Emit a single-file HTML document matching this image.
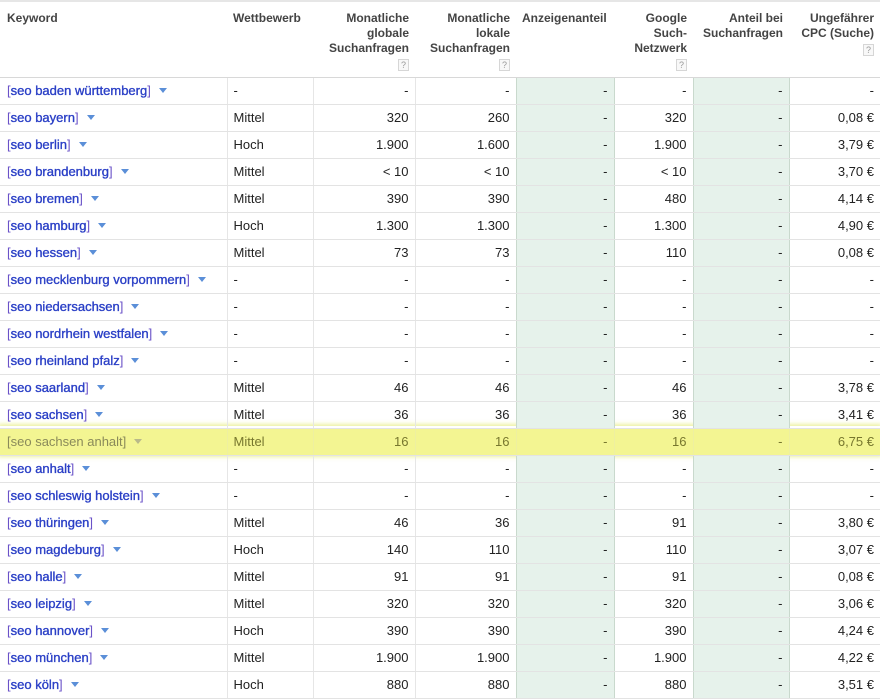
<!DOCTYPE html>
<html><head><meta charset="utf-8"><style>
*{margin:0;padding:0;box-sizing:border-box}
body{width:880px;height:693px;overflow:hidden;background:#fff;font-family:"Liberation Sans",Arial,sans-serif;position:relative}
table{border-collapse:collapse;table-layout:fixed;position:absolute;left:0;top:0;width:880px}
td,th{font-size:13px;border-bottom:1px solid #e3e3e3;border-left:1px solid #e6e6e6;height:27px;padding:0 6px;white-space:nowrap;color:#222}
th{font-size:12px;font-weight:bold;color:#444;vertical-align:top;text-align:right;height:76px;padding-top:9px;line-height:15px;border-top:2px solid #e6e6e6;border-left:none;border-bottom:1px solid #d8d8d8}
th.l{text-align:left}
td.r{text-align:right}
td:first-child{border-left:none;padding-left:7px}
td.g{background:#e6f2eb;border-left:1px solid #c9d9cd}
td.ga{border-left:1px solid #c9d9cd}
.q{display:inline-block;width:11px;height:12px;border:1px solid #d6d6d6;background:#f8f8f8;color:#999;font-size:9px;font-weight:normal;line-height:10px;text-align:center;margin-top:3px}
.k{color:#2a3fc6;-webkit-text-stroke:0.35px #2a3fc6}
.b{color:#6a52c8;-webkit-text-stroke:0}
.a{display:inline-block;width:0;height:0;border-left:4px solid transparent;border-right:4px solid transparent;border-top:5px solid #5b8fd8;margin-left:8px;vertical-align:2px}
tr.h td{background:#f3f592;color:#77772e;border-left-color:#eef0a0}
tr.h .k,tr.h .b{color:#8a8a5a;-webkit-text-stroke:0}
tr.h .a{border-top-color:#b9b98a}
.glow{position:absolute;left:0;top:426px;width:880px;height:29px;box-shadow:0 0 4px 2px rgba(230,235,120,.7);pointer-events:none}
</style></head><body>
<div class="glow"></div>
<table>
<colgroup><col style="width:227px"><col style="width:86px"><col style="width:102px"><col style="width:101px"><col style="width:98px"><col style="width:79px"><col style="width:96px"><col style="width:91px"></colgroup>
<tr><th class="l" style="padding-left:7px">Keyword</th><th class="l">Wettbewerb</th><th>Monatliche<br>globale<br>Suchanfragen<br><span class="q">?</span></th><th>Monatliche<br>lokale<br>Suchanfragen<br><span class="q">?</span></th><th class="l">Anzeigenanteil</th><th>Google<br>Such-<br>Netzwerk<br><span class="q">?</span></th><th>Anteil bei<br>Suchanfragen</th><th>Ungefährer<br>CPC (Suche)<br><span class="q">?</span></th></tr>
<tr><td><span class="b">[</span><span class="k">seo baden württemberg</span><span class="b">]</span><span class="a"></span></td><td>-</td><td class="r">-</td><td class="r">-</td><td class="r g">-</td><td class="r ga">-</td><td class="r g">-</td><td class="r ga">-</td></tr>
<tr><td><span class="b">[</span><span class="k">seo bayern</span><span class="b">]</span><span class="a"></span></td><td>Mittel</td><td class="r">320</td><td class="r">260</td><td class="r g">-</td><td class="r ga">320</td><td class="r g">-</td><td class="r ga">0,08 €</td></tr>
<tr><td><span class="b">[</span><span class="k">seo berlin</span><span class="b">]</span><span class="a"></span></td><td>Hoch</td><td class="r">1.900</td><td class="r">1.600</td><td class="r g">-</td><td class="r ga">1.900</td><td class="r g">-</td><td class="r ga">3,79 €</td></tr>
<tr><td><span class="b">[</span><span class="k">seo brandenburg</span><span class="b">]</span><span class="a"></span></td><td>Mittel</td><td class="r">&lt; 10</td><td class="r">&lt; 10</td><td class="r g">-</td><td class="r ga">&lt; 10</td><td class="r g">-</td><td class="r ga">3,70 €</td></tr>
<tr><td><span class="b">[</span><span class="k">seo bremen</span><span class="b">]</span><span class="a"></span></td><td>Mittel</td><td class="r">390</td><td class="r">390</td><td class="r g">-</td><td class="r ga">480</td><td class="r g">-</td><td class="r ga">4,14 €</td></tr>
<tr><td><span class="b">[</span><span class="k">seo hamburg</span><span class="b">]</span><span class="a"></span></td><td>Hoch</td><td class="r">1.300</td><td class="r">1.300</td><td class="r g">-</td><td class="r ga">1.300</td><td class="r g">-</td><td class="r ga">4,90 €</td></tr>
<tr><td><span class="b">[</span><span class="k">seo hessen</span><span class="b">]</span><span class="a"></span></td><td>Mittel</td><td class="r">73</td><td class="r">73</td><td class="r g">-</td><td class="r ga">110</td><td class="r g">-</td><td class="r ga">0,08 €</td></tr>
<tr><td><span class="b">[</span><span class="k">seo mecklenburg vorpommern</span><span class="b">]</span><span class="a"></span></td><td>-</td><td class="r">-</td><td class="r">-</td><td class="r g">-</td><td class="r ga">-</td><td class="r g">-</td><td class="r ga">-</td></tr>
<tr><td><span class="b">[</span><span class="k">seo niedersachsen</span><span class="b">]</span><span class="a"></span></td><td>-</td><td class="r">-</td><td class="r">-</td><td class="r g">-</td><td class="r ga">-</td><td class="r g">-</td><td class="r ga">-</td></tr>
<tr><td><span class="b">[</span><span class="k">seo nordrhein westfalen</span><span class="b">]</span><span class="a"></span></td><td>-</td><td class="r">-</td><td class="r">-</td><td class="r g">-</td><td class="r ga">-</td><td class="r g">-</td><td class="r ga">-</td></tr>
<tr><td><span class="b">[</span><span class="k">seo rheinland pfalz</span><span class="b">]</span><span class="a"></span></td><td>-</td><td class="r">-</td><td class="r">-</td><td class="r g">-</td><td class="r ga">-</td><td class="r g">-</td><td class="r ga">-</td></tr>
<tr><td><span class="b">[</span><span class="k">seo saarland</span><span class="b">]</span><span class="a"></span></td><td>Mittel</td><td class="r">46</td><td class="r">46</td><td class="r g">-</td><td class="r ga">46</td><td class="r g">-</td><td class="r ga">3,78 €</td></tr>
<tr><td><span class="b">[</span><span class="k">seo sachsen</span><span class="b">]</span><span class="a"></span></td><td>Mittel</td><td class="r">36</td><td class="r">36</td><td class="r g">-</td><td class="r ga">36</td><td class="r g">-</td><td class="r ga">3,41 €</td></tr>
<tr class="h"><td><span class="b">[</span><span class="k">seo sachsen</span><span class="b"> anhalt]</span><span class="a"></span></td><td>Mittel</td><td class="r">16</td><td class="r">16</td><td class="r g">-</td><td class="r ga">16</td><td class="r g">-</td><td class="r ga">6,75 €</td></tr>
<tr><td><span class="b">[</span><span class="k">seo anhalt</span><span class="b">]</span><span class="a"></span></td><td>-</td><td class="r">-</td><td class="r">-</td><td class="r g">-</td><td class="r ga">-</td><td class="r g">-</td><td class="r ga">-</td></tr>
<tr><td><span class="b">[</span><span class="k">seo schleswig holstein</span><span class="b">]</span><span class="a"></span></td><td>-</td><td class="r">-</td><td class="r">-</td><td class="r g">-</td><td class="r ga">-</td><td class="r g">-</td><td class="r ga">-</td></tr>
<tr><td><span class="b">[</span><span class="k">seo thüringen</span><span class="b">]</span><span class="a"></span></td><td>Mittel</td><td class="r">46</td><td class="r">36</td><td class="r g">-</td><td class="r ga">91</td><td class="r g">-</td><td class="r ga">3,80 €</td></tr>
<tr><td><span class="b">[</span><span class="k">seo magdeburg</span><span class="b">]</span><span class="a"></span></td><td>Hoch</td><td class="r">140</td><td class="r">110</td><td class="r g">-</td><td class="r ga">110</td><td class="r g">-</td><td class="r ga">3,07 €</td></tr>
<tr><td><span class="b">[</span><span class="k">seo halle</span><span class="b">]</span><span class="a"></span></td><td>Mittel</td><td class="r">91</td><td class="r">91</td><td class="r g">-</td><td class="r ga">91</td><td class="r g">-</td><td class="r ga">0,08 €</td></tr>
<tr><td><span class="b">[</span><span class="k">seo leipzig</span><span class="b">]</span><span class="a"></span></td><td>Mittel</td><td class="r">320</td><td class="r">320</td><td class="r g">-</td><td class="r ga">320</td><td class="r g">-</td><td class="r ga">3,06 €</td></tr>
<tr><td><span class="b">[</span><span class="k">seo hannover</span><span class="b">]</span><span class="a"></span></td><td>Hoch</td><td class="r">390</td><td class="r">390</td><td class="r g">-</td><td class="r ga">390</td><td class="r g">-</td><td class="r ga">4,24 €</td></tr>
<tr><td><span class="b">[</span><span class="k">seo münchen</span><span class="b">]</span><span class="a"></span></td><td>Mittel</td><td class="r">1.900</td><td class="r">1.900</td><td class="r g">-</td><td class="r ga">1.900</td><td class="r g">-</td><td class="r ga">4,22 €</td></tr>
<tr><td><span class="b">[</span><span class="k">seo köln</span><span class="b">]</span><span class="a"></span></td><td>Hoch</td><td class="r">880</td><td class="r">880</td><td class="r g">-</td><td class="r ga">880</td><td class="r g">-</td><td class="r ga">3,51 €</td></tr>
</table>
</body></html>
